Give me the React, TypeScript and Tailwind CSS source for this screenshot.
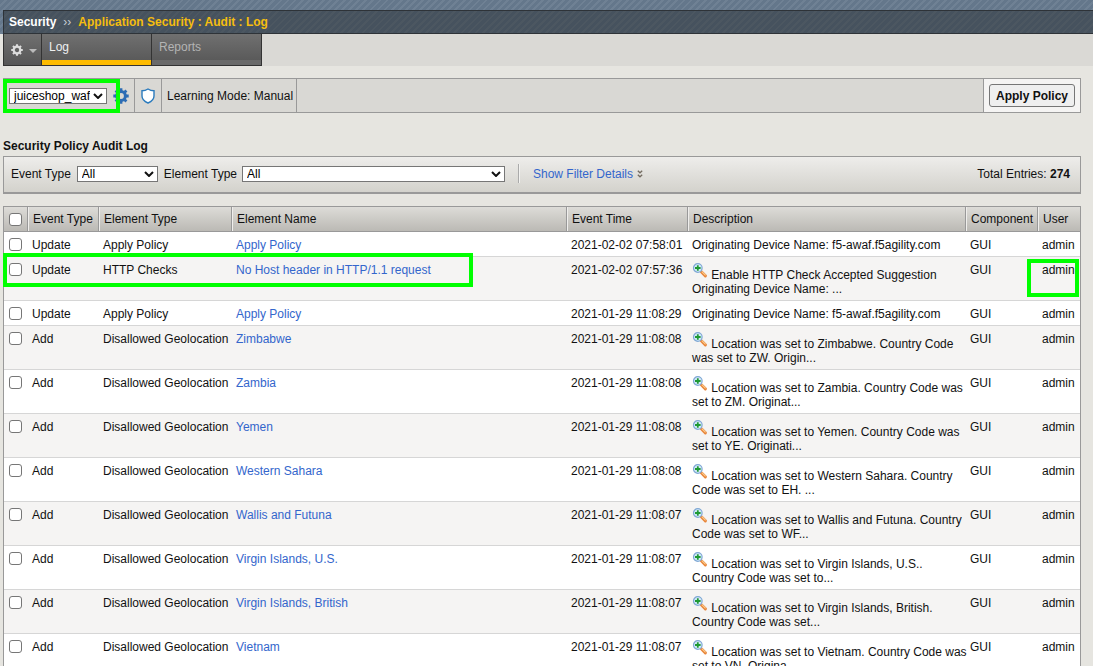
import React from "react";

type Entry = {
  event: string;
  element: string;
  name: string;
  time: string;
  description: string;
  details?: boolean;
};

const geo = (name: string, time: string, description: string): Entry => ({
  event: "Add",
  element: "Disallowed Geolocation",
  name,
  time: `2021-01-29 ${time}`,
  description,
  details: true,
});

const device = "Originating Device Name: f5-awaf.f5agility.com";

const entries: Entry[] = [
  { event: "Update", element: "Apply Policy", name: "Apply Policy", time: "2021-02-02 07:58:01", description: device },
  {
    event: "Update",
    element: "HTTP Checks",
    name: "No Host header in HTTP/1.1 request",
    time: "2021-02-02 07:57:36",
    description: "Enable HTTP Check Accepted Suggestion\nOriginating Device Name: ...",
    details: true,
  },
  { event: "Update", element: "Apply Policy", name: "Apply Policy", time: "2021-01-29 11:08:29", description: device },
  geo("Zimbabwe", "11:08:08", "Location was set to Zimbabwe. Country Code\nwas set to ZW. Origin..."),
  geo("Zambia", "11:08:08", "Location was set to Zambia. Country Code was\nset to ZM. Originat..."),
  geo("Yemen", "11:08:08", "Location was set to Yemen. Country Code was\nset to YE. Originati..."),
  geo("Western Sahara", "11:08:08", "Location was set to Western Sahara. Country\nCode was set to EH. ..."),
  geo("Wallis and Futuna", "11:08:07", "Location was set to Wallis and Futuna. Country\nCode was set to WF..."),
  geo("Virgin Islands, U.S.", "11:08:07", "Location was set to Virgin Islands, U.S..\nCountry Code was set to..."),
  geo("Virgin Islands, British", "11:08:07", "Location was set to Virgin Islands, British.\nCountry Code was set..."),
  geo("Vietnam", "11:08:07", "Location was set to Vietnam. Country Code was\nset to VN. Origina..."),
];

function Gear({ className }: { className: string }) {
  return (
    <svg viewBox="0 0 16 16" className={className} fill="none" stroke="currentColor" aria-hidden="true">
      <circle cx="8" cy="8" r="4.4" strokeWidth="3" />
      <path
        d="M8 .3V3M8 13v2.7M.3 8H3M13 8h2.7M2.6 2.6l1.9 1.9M11.5 11.5l1.9 1.9M2.6 13.4l1.9-1.9M11.5 4.5l1.9-1.9"
        strokeWidth="2.8"
      />
    </svg>
  );
}

function Shield() {
  return (
    <svg viewBox="0 0 14 16" className="h-4 w-3.5" aria-hidden="true">
      <path
        d="M7 1C5.2 2.2 3.2 2.8 1 2.8V8c0 3.4 2.6 5.6 6 7 3.4-1.4 6-3.6 6-7V2.8C10.8 2.8 8.8 2.2 7 1Z"
        fill="#fff"
        stroke="#2b7bbd"
        strokeWidth="1.4"
      />
    </svg>
  );
}

function Magnifier() {
  return (
    <svg viewBox="0 0 16 16" className="inline h-4 w-4 align-baseline" aria-hidden="true">
      <path d="M9.3 8.8 13.4 12.9" stroke="#e8853a" strokeWidth="3" strokeLinecap="round" />
      <path d="M9.8 8.6 13.6 12.4" stroke="#fbcf8e" strokeWidth="1.1" />
      <circle cx="5.8" cy="5" r="4.3" fill="#d5eafa" stroke="#7fa8d4" strokeWidth="1.2" />
      <path d="M5.8 2.2V7.8M3 5H8.6" stroke="#1f9a34" strokeWidth="1.8" />
    </svg>
  );
}

function Select({ id, value, className }: { id: string; value: string; className: string }) {
  return (
    <span className={`relative inline-flex ${className}`}>
      <select
        id={id}
        aria-label={id === "policy" ? "Policy" : undefined}
        className="h-4 w-full appearance-none border border-[#767676] bg-white pr-4 pl-1 text-[12px] leading-[14px] text-black"
      >
        <option>{value}</option>
      </select>
      <svg viewBox="0 0 10 6" className="pointer-events-none absolute top-[5px] right-1 h-1.5 w-2.5" aria-hidden="true">
        <path d="M1 1 5 5 9 1" fill="none" stroke="#111" strokeWidth="2" />
      </svg>
    </span>
  );
}

const check =
  "m-0 block h-[13px] w-[13px] appearance-none rounded-[3px] border border-[#767676] bg-white checked:bg-[#2b66d0]";

const headers = ["Event Type", "Element Type", "Element Name", "Event Time", "Description", "Component", "User"];

export default function App() {
  return (
    <div className="relative h-screen overflow-hidden bg-[#e6e5e0] font-['Liberation_Sans',Arial,sans-serif] text-[12px] leading-[14px] text-[#111]">
      <header className="bg-[#64778b] bg-[repeating-linear-gradient(135deg,transparent_0_3px,#6f8194_3px_5px)] pt-2.5 pl-[3px]">
        <nav
          aria-label="Breadcrumb"
          className="flex h-6 items-center border border-r-0 border-[#2e3338] bg-[#46525e] bg-[repeating-linear-gradient(135deg,transparent_0_3px,#4c5761_3px_5px)] pl-[5px] font-bold"
        >
          <a href="#security" className="text-white">Security</a>
          <span className="px-[7px] font-normal text-[#c8ced4]">››</span>
          <span className="text-[#f5bd0f]">Application Security : Audit : Log</span>
        </nav>
      </header>

      <div className="ml-[3px] flex h-8 bg-[#dad9d5]">
        <div className="flex border border-t-0 border-[#333] bg-linear-to-b from-[#707070] to-[#565656]">
          <button type="button" aria-label="Options" className="flex w-[37px] items-center gap-1.5 pl-[7px] text-[#ddd]">
            <Gear className="h-3 w-3" />
            <svg viewBox="0 0 8 4" className="mt-0.5 h-1 w-2" aria-hidden="true">
              <path d="M0 0H8L4 4Z" fill="#bbb" />
            </svg>
          </button>
          <div className="flex w-[110px] border-l border-[#333]">
            <a href="#log" className="grow border-b-[5px] border-[#fdbb00] pt-1.5 pl-[7px] text-[#f0f0f0]">
              Log
            </a>
          </div>
          <div className="flex w-[110px] border-l border-[#333]">
            <a href="#reports" className="grow border-b-[5px] border-[#6a6a6a] pt-1.5 pl-[7px] text-[#b4b4b4]">
              Reports
            </a>
          </div>
        </div>
      </div>

      <main className="mt-3 mr-3 ml-[3px]">
        <section className="flex h-[35px] border border-[#999] bg-[#d9d8d4]">
          <div className="flex w-[131px] items-center gap-1.5 border-r border-[#999] pl-[5px]">
            <Select id="policy" value="juiceshop_waf" className="w-[98px]" />
            <Gear className="h-4 w-4 text-[#2c6cb4]" />
          </div>
          <div className="flex w-[27px] items-center justify-center border-r border-[#999]">
            <Shield />
          </div>
          <div className="flex items-center border-r border-[#999] pr-[3px] pl-[5px]">Learning Mode: Manual</div>
          <div className="ml-auto flex items-center border-l border-[#999] bg-[#f5f4f3] px-[5px]">
            <button type="button" className="h-[23px] rounded-[3px] border border-[#767676] bg-[#efefef] px-1.5 font-bold">
              Apply Policy
            </button>
          </div>
        </section>

        <h1 className="mt-[26px] mb-[3px] font-bold">Security Policy Audit Log</h1>

        <section className="flex h-[38px] items-center border border-b-2 border-[#999] bg-linear-to-b from-[#eeedeb] to-[#d3d2cc] pr-2.5 pb-[2px] pl-[7px]">
          <label htmlFor="event-type" className="mr-1.5">Event Type</label>
          <Select id="event-type" value="All" className="mr-1.5 w-[81px]" />
          <label htmlFor="element-type" className="mr-[5px]">Element Type</label>
          <Select id="element-type" value="All" className="w-[263px]" />
          <span className="ml-[13px] h-[19px] border-r border-l border-r-[#f2f2f0] border-l-[#aaa]" />
          <a href="#filters" className="ml-[13px] flex items-center gap-1 text-[#3366cc]">
            Show Filter Details
            <svg viewBox="0 0 6 8" className="h-2 w-1.5" fill="none" stroke="#736b60" strokeWidth="1.3" aria-hidden="true">
              <path d="M.8.8 3 2.8 5.2.8M.8 4.8 3 6.8 5.2 4.8" />
            </svg>
          </a>
          <span className="ml-auto">
            Total Entries: <b>274</b>
          </span>
        </section>

        <table className="mt-3 w-full table-fixed border-separate border-spacing-0 border border-[#999] bg-white text-left">
          <colgroup>
            <col className="w-[23px]" />
            <col className="w-[71px]" />
            <col className="w-[133px]" />
            <col />
            <col className="w-[121px]" />
            <col className="w-[278px]" />
            <col className="w-[72px]" />
            <col className="w-[43px]" />
          </colgroup>
          <thead>
            <tr className="h-[25px] bg-linear-to-b from-[#dddcd8] to-[#bab8b3]">
              <th className="border-b border-[#999] pl-[5px]">
                <input type="checkbox" aria-label="Select all" className={check} />
              </th>
              {headers.map((h) => (
                <th
                  key={h}
                  className="border-b border-l border-[#999] pl-[5px] font-normal whitespace-nowrap shadow-[inset_1px_0_0_#efeeec]"
                >
                  {h}
                </th>
              ))}
            </tr>
          </thead>
          <tbody className="[&_td]:border-b [&_td]:border-[#d6d6d6] [&_td]:pt-1.5 [&_td]:pb-1 [&_td]:pl-[5px] [&_td]:align-top">
            {entries.map((e, i) => (
              <tr key={i} className="even:bg-[#f5f4f3]">
                <td>
                  <input type="checkbox" aria-label={`Select ${e.name}`} className={check} />
                </td>
                <td>{e.event}</td>
                <td className="whitespace-nowrap">{e.element}</td>
                <td>
                  <a href="#entry" className="text-[#3366cc]">{e.name}</a>
                </td>
                <td className="whitespace-nowrap">{e.time}</td>
                <td className="whitespace-pre">
                  {e.details && (
                    <>
                      <Magnifier />{" "}
                    </>
                  )}
                  {e.description}
                </td>
                <td>GUI</td>
                <td>admin</td>
              </tr>
            ))}
          </tbody>
        </table>
      </main>

      <div className="pointer-events-none absolute top-[79px] left-[3px] h-[34px] w-[117px] border-4 border-[#00ff00]" />
      <div className="pointer-events-none absolute top-[253px] left-[3px] h-[34px] w-[470px] border-4 border-[#00ff00]" />
      <div className="pointer-events-none absolute top-[259px] right-[14px] h-[38px] w-[52px] border-4 border-[#00ff00]" />
    </div>
  );
}
